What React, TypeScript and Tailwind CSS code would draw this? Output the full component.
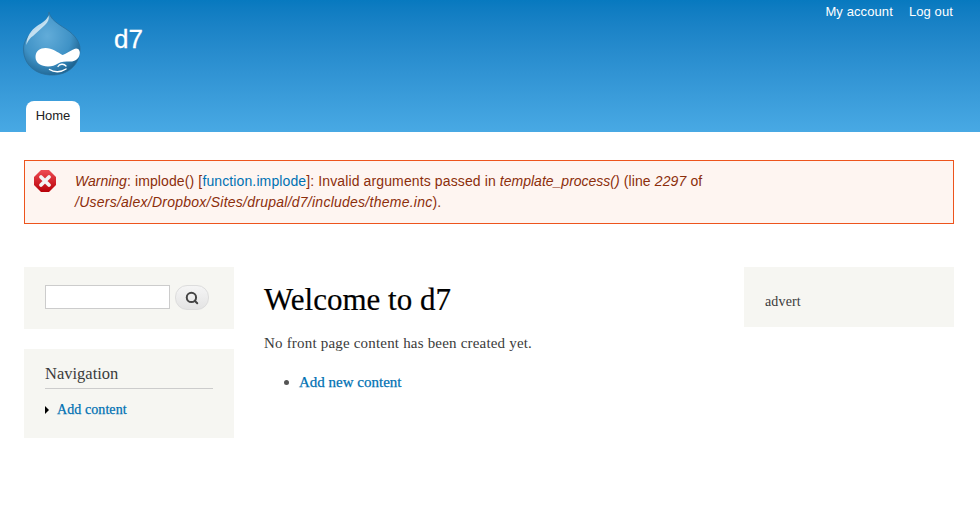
import { Search } from 'lucide-react';

const serif = "font-['Liberation_Serif',Georgia,serif]";

/* ───────── Logo ───────── */

function DropLogo() {
  return (
    <svg width="58" height="66" viewBox="0 0 58 66" className="block">
      <defs>
        <radialGradient id="drop" cx="42%" cy="38%" r="68%">
          <stop offset="0%" stopColor="#62acd9" />
          <stop offset="62%" stopColor="#3f92c6" />
          <stop offset="100%" stopColor="#1a5f8c" />
        </radialGradient>
      </defs>
      <path d="M26 1 C27 8 35 13 43 18 C52 24 57 31 57 38 C57 54 45 64 29 64 C13 64 0.5 54 0.5 38 C0.5 28 8 21 16 16 C21 13 25 8 26 1 Z" fill="url(#drop)" stroke="#2a6f9c" strokeWidth="0.8" />
      <path d="M25.5 4.5 C24 9 19 12 14 15 C8 19 3.5 26 3.3 34 C5.5 29 7 27 10 25 C14 21 18 18 22 14 C25 11 26.5 8 25.5 4.5 Z" fill="#d9ecf7" opacity="0.85" />
      <path d="M12.5 46 C12.5 40 17 37 22.5 37 C29 37 35 41.5 39.5 44 C43 43.5 49 38 53 37.5 C56.5 37.5 57.5 41 56.5 44 C55.5 48 52 50.5 47.5 50.5 C42 50.5 38.5 50.5 35 52.5 C32 54.5 29 55.5 25 55.5 C18 55.5 12.5 52 12.5 46 Z" fill="#ffffff" />
      <path d="M35 55.5 C36.5 52.8 41 52.4 43 55" fill="none" stroke="#ffffff" strokeWidth="1.3" strokeLinecap="round" />
      <path d="M26.5 58.5 C31 61.5 38 61.5 43 58" fill="none" stroke="#ffffff" strokeWidth="1.5" strokeLinecap="round" />
    </svg>
  );
}

function ErrorIcon() {
  return (
    <svg width="22" height="22" viewBox="0 0 22 22" className="block">
      <defs>
        <linearGradient id="err" x1="0" y1="0" x2="0" y2="1">
          <stop offset="0%" stopColor="#ee4c54" />
          <stop offset="100%" stopColor="#b80008" />
        </linearGradient>
      </defs>
      <polygon points="7,0 15,0 22,7 22,15 15,22 7,22 0,15 0,7" fill="url(#err)" />
      <path d="M7 7 L15 15 M15 7 L7 15" stroke="#f4f4f4" strokeWidth="3.8" strokeLinecap="round" />
    </svg>
  );
}

/* ───────── Page ───────── */

export default function App() {
  return (
    <div className="h-[528px] w-[980px] overflow-hidden bg-white font-['Liberation_Sans',Arial,sans-serif]">
      {/* ─── Header ─── */}
      <header className="flex h-[132px] bg-gradient-to-b from-[#0779bf] to-[#48a9e4] pl-[23px] pr-[27px]">
        <div className="pt-[11px]">
          <DropLogo />
        </div>
        <div className="ml-[33px] pt-[24px] text-[26px] leading-[30px] text-white [-webkit-text-stroke:0.3px]">d7</div>
        <div className="flex-1" />
        <nav className="flex gap-4 pt-[4px] text-[13px] leading-4 tracking-[0.1px] text-white">
          <span>My account</span>
          <span>Log out</span>
        </nav>
      </header>
      <div className="relative">
        <span className="absolute -top-[31px] left-[26px] h-[31px] w-[54px] rounded-t-lg bg-white pt-[7px] text-center text-[13px] leading-4 text-[#222]">
          Home
        </span>
      </div>

      {/* ─── Warning ─── */}
      <div className="mx-[24px] mt-[28px] flex h-[64px] w-[930px] border border-[#ed541d] bg-[#fef5f1] pl-[9px] pt-[9px]">
        <ErrorIcon />
        <p className="ml-[19px] pt-[1px] text-sm leading-[21px] tracking-[0.12px] text-[#8c2e0b]">
          <em className="tracking-normal">Warning</em>: implode() [<span className="text-[#0071b3]">function.implode</span>]: Invalid arguments passed in <em className="tracking-normal">template_process()</em> (line <em>2297</em> of
          <br />
          <em className="tracking-[0.25px]">/Users/alex/Dropbox/Sites/drupal/d7/includes/theme.inc</em>).
        </p>
      </div>

      {/* ─── Columns ─── */}
      <div className={`mt-[43px] flex px-[24px] ${serif}`}>
        <aside className="w-[210px] shrink-0">
          <div className="flex h-[62px] items-start gap-[5px] bg-[#f6f6f2] pl-[21px] pt-[18px]">
            <div className="h-6 w-[125px] border border-[#ccc] bg-white" />
            <div className="flex h-[25px] w-[34px] items-center justify-center rounded-[12px] border border-[#ddd] bg-gradient-to-b from-[#f5f5f5] to-[#e4e4e4]">
              <Search size={14} strokeWidth={3.4} className="text-[#444]" />
            </div>
          </div>
          <div className="mt-[20px] h-[89px] bg-[#f6f6f2] px-[21px] pt-[14px]">
            <h2 className="border-b border-[#ccc] pb-[4px] text-[16.5px] leading-[21px] text-[#3b3b3b]">Navigation</h2>
            <div className="mt-[11px] flex items-center text-[14px] leading-5 tracking-[0.08px] text-[#0071b3] [-webkit-text-stroke:0.25px]">
              <span className="h-0 w-0 border-y-[4px] border-l-[4px] border-y-transparent border-l-black" />
              <span className="ml-2">Add content</span>
            </div>
          </div>
        </aside>

        <main className="ml-[30px] w-[450px] shrink-0 pt-[14px]">
          <h1 className="text-[31px] leading-[38px] text-black [-webkit-text-stroke:0.2px]">Welcome to d7</h1>
          <p className="mt-[14px] text-[15px] leading-5 tracking-[0.19px] text-[#3b3b3b]">No front page content has been created yet.</p>
          <ul className="mt-[19px] pl-[35px]">
            <li className="relative text-[15px] leading-5 text-[#0071b3] [-webkit-text-stroke:0.25px]">
              <span className="absolute -left-[15px] top-[8px] h-[5px] w-[5px] rounded-full bg-[#555]" />
              Add new content
            </li>
          </ul>
        </main>

        <aside className="ml-[30px] h-[60px] w-[210px] shrink-0 bg-[#f6f6f2] pl-[21px] pt-[26px] text-[14px] leading-[18px] tracking-[0.15px] text-[#3b3b3b]">
          advert
        </aside>
      </div>
    </div>
  );
}
